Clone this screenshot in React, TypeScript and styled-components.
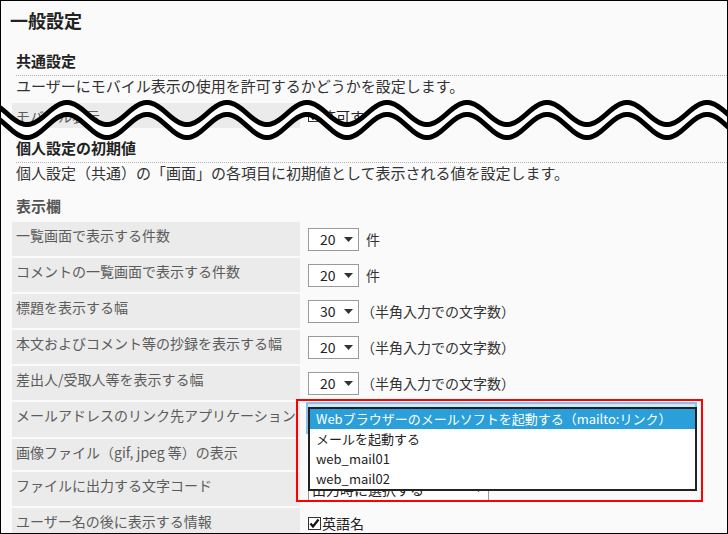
import React from 'react';
import styled, { createGlobalStyle } from 'styled-components';

const GlobalStyle = createGlobalStyle`
  html, body {
    margin: 0;
    padding: 0;
    background: #ffffff;
  }
  body {
    font-family: "Noto Sans CJK JP", "Noto Sans", sans-serif;
  }
`;

const Frame = styled.div`
  position: relative;
  width: 728px;
  height: 534px;
  box-sizing: border-box;
  border: 1px solid #000;
  background: #fafafa;
  overflow: hidden;
  color: #333;
`;

const Title = styled.h1`
  margin: 0;
  padding: 7px 0 0 9px;
  font-size: 18px;
  line-height: 24px;
  font-weight: bold;
  color: #222;
`;

const Section = styled.div`
  padding-left: 11px;
`;

const SectionTitle = styled.h2<{ $top: number }>`
  margin: ${(p) => p.$top}px 0 0 4px;
  padding-bottom: 4px;
  font-size: 15px;
  line-height: 20px;
  font-weight: bold;
  color: #222;
  border-bottom: 1px dotted #b4b4b4;
`;

const Desc = styled.p`
  margin: 0 0 0 4px;
  font-size: 15px;
  line-height: 20px;
  color: #333;
`;

const GroupTitle = styled.h3`
  margin: 13px 0 0 4px;
  font-size: 15px;
  line-height: 20px;
  font-weight: bold;
  color: #555;
`;

const Grid = styled.div<{ $top: number }>`
  display: flex;
  flex-direction: column;
  gap: 2px;
  margin-top: ${(p) => p.$top}px;
`;

const Row = styled.div<{ $h: number }>`
  display: flex;
  height: ${(p) => p.$h}px;
`;

const Label = styled.div<{ $center?: boolean }>`
  flex: 0 0 284px;
  background: #ebebeb;
  padding: ${(p) => (p.$center ? '0 0 0 4px' : '3px 0 0 4px')};
  display: flex;
  align-items: ${(p) => (p.$center ? 'center' : 'flex-start')};
  font-size: 14px;
  line-height: 20px;
  color: #5c5c5c;
  white-space: nowrap;
  overflow: hidden;
`;

const Value = styled.div<{ $align?: string }>`
  position: relative;
  flex: 1;
  display: flex;
  align-items: ${(p) => p.$align || 'center'};
  padding-left: 8px;
  font-size: 14px;
  color: #333;
`;

const SelectBox = styled.div<{ $w: number; $pl?: number }>`
  box-sizing: border-box;
  width: ${(p) => p.$w}px;
  height: 23px;
  border: 1px solid #9a9a9a;
  background: #fff;
  display: flex;
  align-items: center;
  justify-content: space-between;
  padding: 0 5px 0 ${(p) => p.$pl ?? 11}px;
  font-size: 14px;
  color: #222;
  white-space: nowrap;
`;

const Suffix = styled.span<{ $ml: number }>`
  margin-left: ${(p) => p.$ml}px;
  font-size: 14px;
  line-height: 20px;
  color: #333;
`;

const FocusSelect = styled.div`
  box-sizing: border-box;
  margin-left: -2px;
  width: 391px;
  height: 32px;
  border: 2px solid #8cc2ea;
  background: #cfe6f7;
`;

const Popup = styled.ul`
  position: absolute;
  z-index: 3;
  left: 8px;
  top: 5px;
  box-sizing: border-box;
  width: 389px;
  margin: 0;
  padding: 0;
  list-style: none;
  border: 2px solid #222;
  background: #fff;
`;

const Option = styled.li<{ $active?: boolean }>`
  height: 20px;
  line-height: 20px;
  padding-left: 6px;
  font-size: 13px;
  white-space: nowrap;
  background: ${(p) => (p.$active ? '#2a9fd9' : '#fff')};
  color: ${(p) => (p.$active ? '#fff' : '#222')};
`;

const Highlight = styled.div`
  position: absolute;
  z-index: 4;
  left: -4px;
  top: -3px;
  width: 407px;
  height: 103px;
  box-sizing: border-box;
  border: 2px solid #ff0000;
  pointer-events: none;
`;

const CheckText = styled.span`
  margin-left: 1px;
  font-size: 14px;
  line-height: 20px;
  color: #222;
`;

const WaveLayer = styled.svg`
  position: absolute;
  z-index: 5;
  left: -1px;
  top: -1px;
`;

const Triangle = () => (
  <svg width="9" height="5" viewBox="0 0 9 5">
    <path d="M0 0 H9 L4.5 5 Z" fill="#333" />
  </svg>
);

const Select = ({ value, w, pl }: { value: string; w: number; pl?: number }) => (
  <SelectBox $w={w} $pl={pl}>
    <span>{value}</span>
    <Triangle />
  </SelectBox>
);

const Checkbox = () => (
  <svg width="13" height="13" viewBox="0 0 13 13">
    <rect x="0.5" y="0.5" width="12" height="12" fill="#fff" stroke="#333" />
    <path d="M2.5 6.5 L5 9.5 L10.5 2.5" fill="none" stroke="#111" strokeWidth="2.2" />
  </svg>
);

const wave = (c: number, a: number) => {
  const pts: string[] = [];
  for (let x = -4; x <= 732; x += 2) {
    const y = c - a * Math.cos((2 * Math.PI * (x - 67)) / 80);
    pts.push(`${x},${y.toFixed(2)}`);
  }
  return pts;
};

const Wave = () => {
  const top = wave(113.5, 11);
  const bottom = wave(126, 11.5);
  const band = `M${top.join(' L')} L${[...bottom].reverse().join(' L')} Z`;
  return (
    <WaveLayer width="728" height="160" viewBox="0 0 728 160">
      <path d={band} fill="#fff" />
      <path d={`M${top.join(' L')}`} fill="none" stroke="#000" strokeWidth="5" />
      <path d={`M${bottom.join(' L')}`} fill="none" stroke="#000" strokeWidth="5" />
    </WaveLayer>
  );
};

const rows = [
  { label: '一覧画面で表示する件数', value: '20', suffix: '件' },
  { label: 'コメントの一覧画面で表示する件数', value: '20', suffix: '件' },
  { label: '標題を表示する幅', value: '30', suffix: '（半角入力での文字数）' },
  { label: '本文およびコメント等の抄録を表示する幅', value: '20', suffix: '（半角入力での文字数）' },
  { label: '差出人/受取人等を表示する幅', value: '20', suffix: '（半角入力での文字数）' },
];

const mailOptions = [
  'Webブラウザーのメールソフトを起動する（mailto:リンク）',
  'メールを起動する',
  'web_mail01',
  'web_mail02',
];

export default function App() {
  return (
    <>
      <GlobalStyle />
      <Frame>
        <Title>一般設定</Title>
        <Section>
          <SectionTitle $top={19}>共通設定</SectionTitle>
          <Desc>ユーザーにモバイル表示の使用を許可するかどうかを設定します。</Desc>
          <Grid $top={7}>
            <Row $h={25}>
              <Label $center>モバイル表示</Label>
              <Value>
                <Checkbox />
                <CheckText>許可する</CheckText>
              </Value>
            </Row>
          </Grid>
          <SectionTitle $top={10}>個人設定の初期値</SectionTitle>
          <Desc>個人設定（共通）の「画面」の各項目に初期値として表示される値を設定します。</Desc>
          <GroupTitle>表示欄</GroupTitle>
          <Grid $top={6}>
            {rows.map((r) => (
              <Row $h={34} key={r.label}>
                <Label>{r.label}</Label>
                <Value>
                  <Select value={r.value} w={51} />
                  <Suffix $ml={r.suffix === '件' ? 7 : 2}>{r.suffix}</Suffix>
                </Value>
              </Row>
            ))}
            <Row $h={35}>
              <Label>メールアドレスのリンク先アプリケーション</Label>
              <Value $align="flex-start">
                <FocusSelect />
                <Highlight />
                <Popup>
                  {mailOptions.map((o, i) => (
                    <Option key={o} $active={i === 0}>
                      {o}
                    </Option>
                  ))}
                </Popup>
              </Value>
            </Row>
            <Row $h={31}>
              <Label>画像ファイル（gif, jpeg 等）の表示</Label>
              <Value />
            </Row>
            <Row $h={34}>
              <Label>ファイルに出力する文字コード</Label>
              <Value>
                <Select value="出力時に選択する" w={181} pl={3} />
              </Value>
            </Row>
            <Row $h={30}>
              <Label>ユーザー名の後に表示する情報</Label>
              <Value>
                <Checkbox />
                <CheckText>英語名</CheckText>
              </Value>
            </Row>
          </Grid>
        </Section>
        <Wave />
      </Frame>
    </>
  );
}
